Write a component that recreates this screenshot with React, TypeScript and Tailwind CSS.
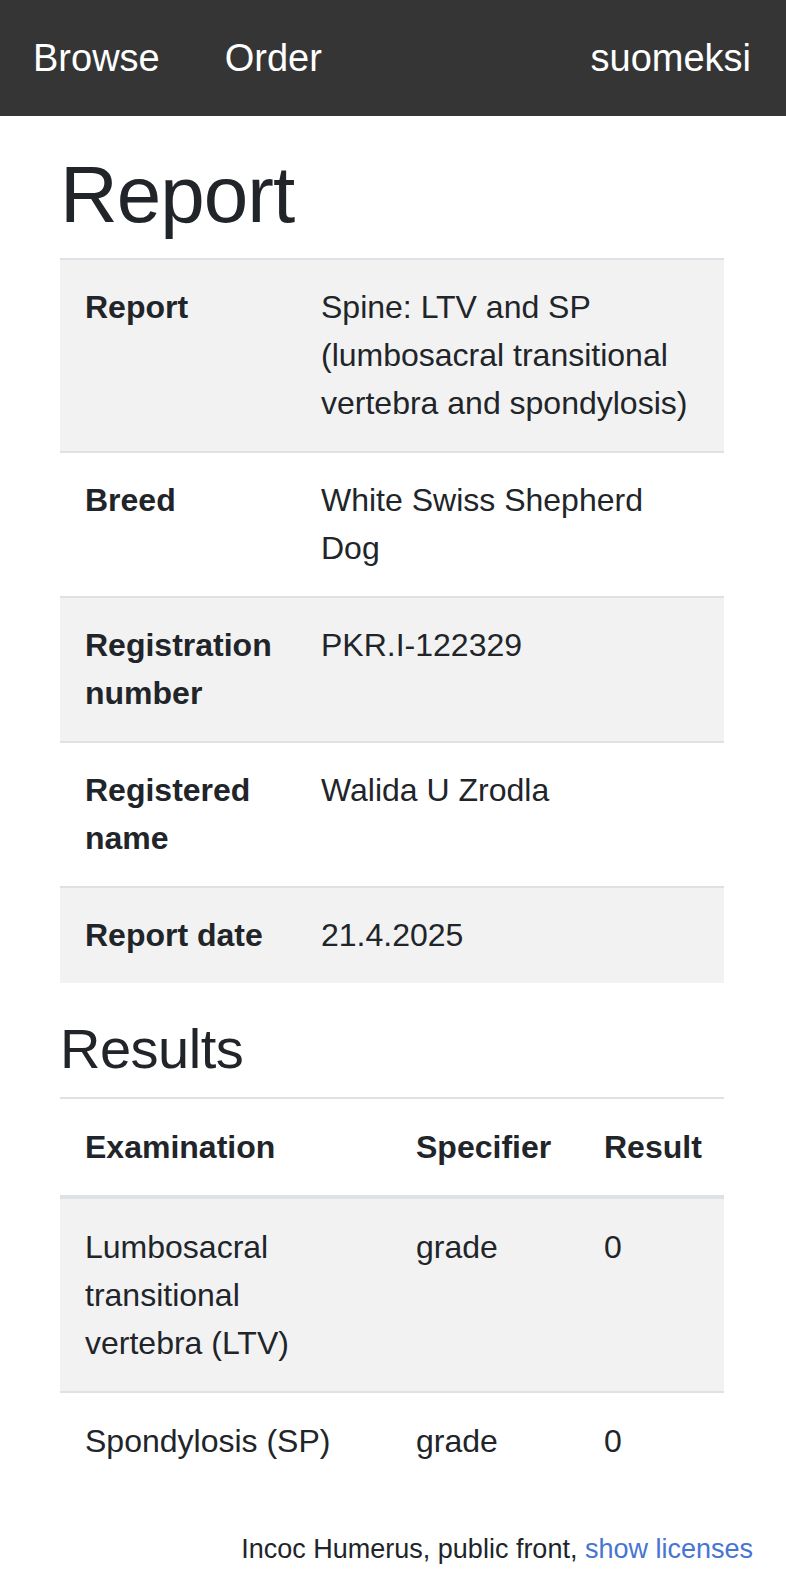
import React from 'react';

const details: { label: string; value: string }[] = [
  { label: 'Report', value: 'Spine: LTV and SP (lumbosacral transitional vertebra and spondylosis)' },
  { label: 'Breed', value: 'White Swiss Shepherd Dog' },
  { label: 'Registration number', value: 'PKR.I-122329' },
  { label: 'Registered name', value: 'Walida U Zrodla' },
  { label: 'Report date', value: '21.4.2025' },
];

const results = [
  { exam: 'Lumbosacral transitional vertebra (LTV)', spec: 'grade', result: '0' },
  { exam: 'Spondylosis (SP)', spec: 'grade', result: '0' },
];

export default function App() {
  return (
    <div className="min-h-[1572px] bg-white text-[#212529] font-['Liberation_Sans',Arial,sans-serif]">
      <nav className="h-[116px] bg-[#353535] flex items-center pl-[33px] pr-[35px] text-white text-[38px]">
        <a className="mr-[65px]">Browse</a>
        <a>Order</a>
        <a className="ml-auto">suomeksi</a>
      </nav>

      <main className="pl-[60px] pr-[62px]">
        <h1 className="mt-[31px] mb-[15px] text-[80px] leading-[96px] font-medium tracking-[-1px]">Report</h1>

        <div className="mb-[32px]">
          {details.map((d, i) => (
            <div
              key={d.label}
              className={`grid grid-cols-[237px_1fr] border-t-2 border-[#dee2e6] text-[32px] leading-[48px] ${
                i % 2 === 0 ? 'bg-[#f2f2f2]' : 'bg-white'
              }`}
            >
              <div className="pl-[25px] pr-[10px] pt-[23px] pb-[24px] font-bold">{d.label}</div>
              <div className="pl-[24px] pr-[24px] pt-[23px] pb-[24px]">{d.value}</div>
            </div>
          ))}
        </div>

        <h3 className="mb-[15px] text-[56px] leading-[67px] font-medium tracking-[-0.5px]">Results</h3>

        <div className="text-[32px] leading-[48px]">
          <div className="grid grid-cols-[332px_188px_1fr] border-t-2 border-b-4 border-[#dee2e6] font-bold">
            <div className="pl-[25px] pt-[24px] pb-[24px]">Examination</div>
            <div className="pl-[24px] pt-[24px] pb-[24px]">Specifier</div>
            <div className="pl-[24px] pt-[24px] pb-[24px]">Result</div>
          </div>
          {results.map((r, i) => (
            <div
              key={r.exam}
              className={`grid grid-cols-[332px_188px_1fr] ${i > 0 ? 'border-t-2 border-[#dee2e6]' : ''} ${
                i % 2 === 0 ? 'bg-[#f2f2f2]' : 'bg-white'
              }`}
            >
              <div className="pl-[25px] pr-[50px] pt-[24px] pb-[24px]">{r.exam}</div>
              <div className="pl-[24px] pt-[24px] pb-[24px]">{r.spec}</div>
              <div className="pl-[24px] pt-[24px] pb-[24px]">{r.result}</div>
            </div>
          ))}
        </div>
      </main>

      <footer className="pt-[40px] text-right pr-[33px] text-[27px] leading-[40px]">
        Incoc Humerus, public front, <a className="text-[#4675d2]">show licenses</a>
      </footer>
    </div>
  );
}
